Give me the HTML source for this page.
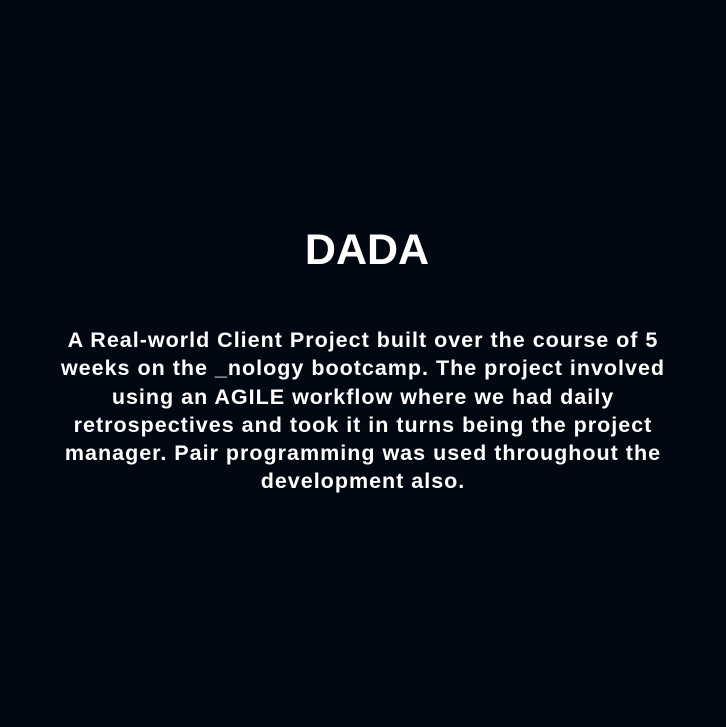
<!DOCTYPE html>
<html><head><style>
html,body{margin:0;padding:0;background:#020812;width:726px;height:727px;overflow:hidden}
body{font-family:"Liberation Sans",sans-serif;color:#fff;font-weight:bold;text-align:center}
h1{position:absolute;left:4px;width:726px;top:224px;margin:0;font-size:43px;line-height:52px;letter-spacing:0px}
p{position:absolute;left:0;width:726px;top:326px;margin:0;font-size:21.5px;line-height:28.3px;letter-spacing:1px;white-space:nowrap}
</style></head><body>
<h1>DADA</h1>
<p>A Real-world Client Project built over the course of 5<br>weeks on the _nology bootcamp. The project involved<br>using an AGILE workflow where we had daily<br>retrospectives and took it in turns being the project<br>manager. Pair programming was used throughout the<br>development also.</p>
</body></html>
